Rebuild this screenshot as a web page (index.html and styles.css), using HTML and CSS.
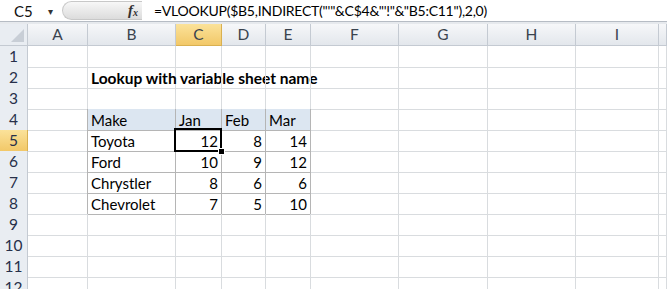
FILE: index.html
```html
<!DOCTYPE html>
<html lang="en">
<head>
    <meta charset="UTF-8">
    <title>Lookup with variable sheet name</title>
    <link rel="stylesheet" href="styles.css">
</head>
<body>
    <div class="formula-bar">
        <div class="name-box">C5<span class="drop">&#9662;</span></div>
        <div class="fx-box"><span class="fx">f<sub>x</sub></span></div>
        <div class="formula">=VLOOKUP($B5,INDIRECT("'"&amp;C$4&amp;"'!"&amp;"B5:C11"),2,0)</div>
    </div>

    <div class="sheet">
        <div class="row head">
            <div class="corner"></div>
            <div class="col">A</div>
            <div class="col">B</div>
            <div class="col sel">C</div>
            <div class="col">D</div>
            <div class="col">E</div>
            <div class="col">F</div>
            <div class="col">G</div>
            <div class="col">H</div>
            <div class="col">I</div>
            <div class="col"></div>
        </div>
        <div class="row">
            <div class="rh">1</div>
            <div class="c"></div><div class="c"></div><div class="c"></div><div class="c"></div><div class="c"></div>
            <div class="c"></div><div class="c"></div><div class="c"></div><div class="c"></div><div class="c"></div>
        </div>
        <div class="row">
            <div class="rh">2</div>
            <div class="c"></div>
            <div class="c title">Lookup with variable sheet name</div>
            <div class="c"></div><div class="c"></div><div class="c"></div>
            <div class="c"></div><div class="c"></div><div class="c"></div><div class="c"></div><div class="c"></div>
        </div>
        <div class="row">
            <div class="rh">3</div>
            <div class="c"></div>
            <div class="c above"></div><div class="c above"></div><div class="c above"></div><div class="c above"></div>
            <div class="c"></div><div class="c"></div><div class="c"></div><div class="c"></div><div class="c"></div>
        </div>
        <div class="row">
            <div class="rh">4</div>
            <div class="c before"></div>
            <div class="c t th">Make</div>
            <div class="c t th">Jan</div>
            <div class="c t th">Feb</div>
            <div class="c t th">Mar</div>
            <div class="c"></div><div class="c"></div><div class="c"></div><div class="c"></div><div class="c"></div>
        </div>
        <div class="row">
            <div class="rh sel">5</div>
            <div class="c before"></div>
            <div class="c t">Toyota</div>
            <div class="c t num active">12</div>
            <div class="c t num">8</div>
            <div class="c t num">14</div>
            <div class="c"></div><div class="c"></div><div class="c"></div><div class="c"></div><div class="c"></div>
        </div>
        <div class="row">
            <div class="rh">6</div>
            <div class="c before"></div>
            <div class="c t">Ford</div>
            <div class="c t num">10</div>
            <div class="c t num">9</div>
            <div class="c t num">12</div>
            <div class="c"></div><div class="c"></div><div class="c"></div><div class="c"></div><div class="c"></div>
        </div>
        <div class="row">
            <div class="rh">7</div>
            <div class="c before"></div>
            <div class="c t">Chrystler</div>
            <div class="c t num">8</div>
            <div class="c t num">6</div>
            <div class="c t num">6</div>
            <div class="c"></div><div class="c"></div><div class="c"></div><div class="c"></div><div class="c"></div>
        </div>
        <div class="row">
            <div class="rh">8</div>
            <div class="c before"></div>
            <div class="c t">Chevrolet</div>
            <div class="c t num">7</div>
            <div class="c t num">5</div>
            <div class="c t num">10</div>
            <div class="c"></div><div class="c"></div><div class="c"></div><div class="c"></div><div class="c"></div>
        </div>
        <div class="row">
            <div class="rh">9</div>
            <div class="c"></div><div class="c"></div><div class="c"></div><div class="c"></div><div class="c"></div>
            <div class="c"></div><div class="c"></div><div class="c"></div><div class="c"></div><div class="c"></div>
        </div>
        <div class="row">
            <div class="rh">10</div>
            <div class="c"></div><div class="c"></div><div class="c"></div><div class="c"></div><div class="c"></div>
            <div class="c"></div><div class="c"></div><div class="c"></div><div class="c"></div><div class="c"></div>
        </div>
        <div class="row">
            <div class="rh">11</div>
            <div class="c"></div><div class="c"></div><div class="c"></div><div class="c"></div><div class="c"></div>
            <div class="c"></div><div class="c"></div><div class="c"></div><div class="c"></div><div class="c"></div>
        </div>
        <div class="row">
            <div class="rh">12</div>
            <div class="c"></div><div class="c"></div><div class="c"></div><div class="c"></div><div class="c"></div>
            <div class="c"></div><div class="c"></div><div class="c"></div><div class="c"></div><div class="c"></div>
        </div>
    </div>
</body>
</html>
```

FILE: styles.css
```css
body {
    margin: 0;
    font-family: Lato, "Open Sans", sans-serif;
    font-size: 15px;
    color: #000;
    background: #fff;
    overflow: hidden;
}
.formula-bar {
    display: flex;
    height: 21px;
    border-bottom: 1px solid #b6bcc4;
    background: #fff;
}
.name-box {
    width: 62px;
    padding-left: 14px;
    box-sizing: border-box;
    display: flex;
    align-items: center;
    font-size: 15px;
    color: #111;
}
.drop {
    font-size: 10px;
    margin-left: 15px;
    color: #333;
}
.fx-box {
    width: 80px;
    margin: 1px 0;
    border-radius: 10px 0 0 10px;
    background: linear-gradient(#f7f7f7, #dcdcdc);
    border: 1px solid #c8c8c8;
    border-right: none;
    display: flex;
    align-items: center;
    justify-content: flex-end;
    padding-right: 4px;
    box-sizing: border-box;
}
.fx {
    font-family: "Liberation Serif", serif;
    font-style: italic;
    font-weight: bold;
    font-size: 15px;
    color: #333;
}
.fx sub {
    font-size: 10px;
    vertical-align: -1px;
}
.formula {
    padding-left: 12px;
    display: flex;
    align-items: center;
    font-size: 14px;
    letter-spacing: -0.25px;
    white-space: nowrap;
}
.sheet {
    border-top: 2px solid #e6e9ed;
}
.row {
    display: grid;
    grid-template-columns: 28px 60px 88px 46px 44px 45px 88px 89px 88px 83px 1fr;
    height: 21px;
}
.row.head {
    height: 22px;
}
.row > div {
    box-sizing: border-box;
    border-right: 1px solid #d9dcdf;
    border-bottom: 1px solid #d9dcdf;
}
.corner {
    background: #e9edf2;
    position: relative;
    border-color: #c4cad2 !important;
}
.corner::after {
    content: "";
    position: absolute;
    right: 3px;
    bottom: 3px;
    width: 13px;
    height: 13px;
    background: #c8ced6;
    clip-path: polygon(100% 0, 100% 100%, 0 100%);
}
.col {
    background: linear-gradient(#f6f7f9, #e3e7ec);
    border-color: #c4cad2 !important;
    text-align: center;
    line-height: 21px;
    color: #3a434e;
    font-size: 15.5px;
}
.col.sel,
.rh.sel {
    background: linear-gradient(#fbe29a, #f2c868);
    border-color: #d9b050 !important;
}
.rh {
    background: #e9edf2;
    border-color: #c4cad2 !important;
    text-align: center;
    line-height: 21px;
    color: #27304a;
    font-size: 15.5px;
}
.c {
    display: flex;
    align-items: flex-end;
    padding: 0 3px 1px;
    white-space: nowrap;
    font-size: 15px;
}
.title {
    font-weight: bold;
    font-size: 15.5px;
    overflow: visible;
}
.t {
    border-color: #b5b5b5 !important;
}
.th {
    background: #dce6f1;
}
.above {
    border-bottom-color: #b5b5b5 !important;
}
.before {
    border-right-color: #b5b5b5 !important;
}
.num {
    justify-content: flex-end;
}
.active {
    position: relative;
}
.active::before {
    content: "";
    position: absolute;
    left: -2px;
    top: -2px;
    right: -1px;
    bottom: -1px;
    border: 2px solid #000;
}
.active::after {
    content: "";
    position: absolute;
    right: -4px;
    bottom: -4px;
    width: 5px;
    height: 5px;
    background: #000;
    border: 1px solid #fff;
    z-index: 1;
}
```
